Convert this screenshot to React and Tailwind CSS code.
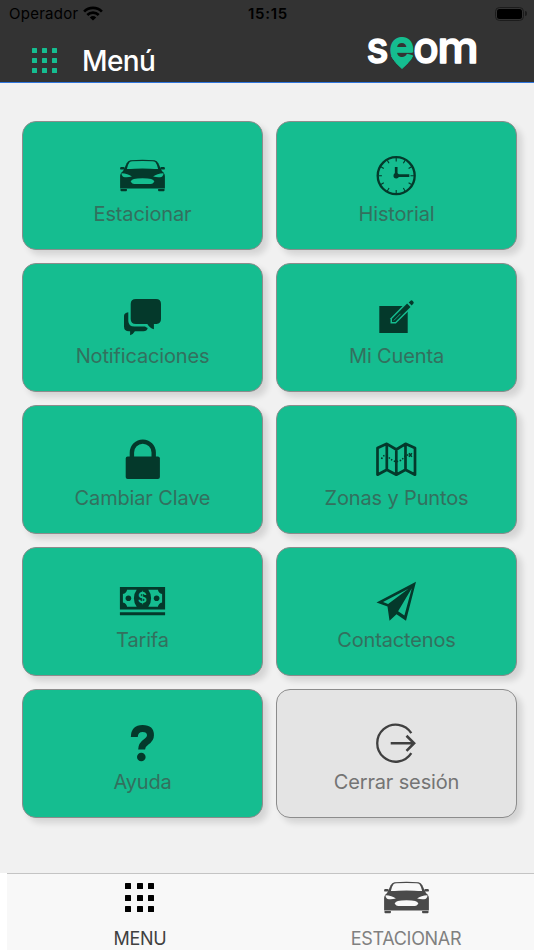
import clsx from "clsx"

function CarIcon({ hole }) {
  return (
    <svg viewBox="0 0 48 48" className="size-[48px] fill-current">
      <path d="M4.2 20 L8.2 11.2 Q9.5 8.6 12 8.3 Q24 7.2 36 8.3 Q38.5 8.6 39.8 11.2 L43.8 20 Z" />
      <path className={hole} d="M8.3 17.2 Q9.2 12.5 11 10.2 Q12 9.4 14 9.3 Q24 8.5 34 9.3 Q36 9.4 37 10.2 Q38.8 12.5 39.7 17.2 Q24 16 8.3 17.2 Z" />
      <path d="M7 17 H41 L45 20.5 Q46.4 22 46.4 24 V36.5 H1.6 V24 Q1.6 22 3 20.5 Z" />
      <rect x="1.6" y="15" width="4.6" height="2.6" rx="1.2" />
      <rect x="41.8" y="15" width="4.6" height="2.6" rx="1.2" />
      <path d="M2 37.1 H8.4 V38.4 Q8.4 39.2 7.6 39.2 H2.8 Q2 39.2 2 38.4 Z M39.6 37.1 H46 V38.4 Q46 39.2 45.2 39.2 H40.4 Q39.6 39.2 39.6 38.4 Z" />
      <path className={hole} d="M3 21.3 Q9.5 21.5 13.4 24.6 Q8 26 4.5 24.8 Q2.9 24 3 21.3 Z M45 21.3 Q38.5 21.5 34.6 24.6 Q40 26 43.5 24.8 Q45.1 24 45 21.3 Z" />
      <path className={hole} d="M24 26.2 Q35.5 26.2 35.5 29.2 Q35.5 32.1 30 32.1 H18 Q12.5 32.1 12.5 29.2 Q12.5 26.2 24 26.2 Z" />
    </svg>
  )
}

const TICKS = [0, 30, 60, 90, 120, 150, 180, 210, 240, 270, 300, 330]

function ClockIcon() {
  return (
    <svg viewBox="0 0 48 48" className="size-[48px] fill-none stroke-current">
      <circle cx="23.7" cy="23.7" r="18.5" strokeWidth="2.3" />
      {TICKS.map((deg) => (
        <path key={deg} d="M23.7 6 V9.4" strokeWidth="1.1" transform={`rotate(${deg} 23.7 23.7)`} />
      ))}
      <path d="M23.7 23.7 V15 M23.7 23.7 H36.8" strokeWidth="2.7" />
      <circle cx="23.7" cy="23.7" r="2.7" className="fill-current stroke-none" />
    </svg>
  )
}

function ChatIcon() {
  return (
    <svg viewBox="0 0 48 48" className="size-[48px] fill-current">
      <path d="M17.5 5 H37.5 Q42.5 5 42.5 10 V25 Q42.5 29.4 38 30 H35.4 V35.3 Q31 34 28.8 30 H17.5 Q12.2 30 12.2 25 V10 Q12.2 5 17.5 5 Z" />
      <path d="M9.8 18.3 V27 Q10 32.5 16 32.6 H26.5 Q27.4 33.4 29.2 34 Q28.4 37.3 25 37.3 H16.4 Q14.5 40.6 11.6 41.3 V37.3 H10.5 Q5.5 37.2 5.5 32.5 V22 Q5.6 19 9.8 18.3 Z" />
    </svg>
  )
}

function EditIcon() {
  return (
    <svg viewBox="0 0 48 48" className="size-[48px] fill-current">
      <path d="M6.8 12 H35.2 V39 H6.8 Z" />
      <path className="fill-[#15bd90]" d="M31 11 L18 24.2 V29.6 H23.4 L36.5 16.6 V11 Z" />
      <path d="M34.6 9.6 L19.5 24.8 V28.1 H22.9 L38 13 Z" />
      <path d="M36.2 8.5 L38.4 6.5 Q39.2 6 40 6.8 L41 7.9 Q41.6 8.7 40.9 9.6 L39.2 11.6 Z" />
      <path className="fill-none stroke-[#15bd90] stroke-[0.8]" d="M21.3 26.5 L28 19.8" />
    </svg>
  )
}

function LockIcon() {
  return (
    <svg viewBox="0 0 48 48" className="size-[48px] fill-current">
      <rect x="7.2" y="20.6" width="34.2" height="22.4" rx="2" />
      <path className="fill-none stroke-current stroke-[4.4]" d="M13.4 21.5 V16.5 A10.9 10.9 0 0 1 35.2 16.5 V21.5" />
    </svg>
  )
}

function MapIcon() {
  return (
    <svg viewBox="0 0 48 48" className="size-[48px] fill-none stroke-current">
      <path
        strokeWidth="2.7"
        strokeLinejoin="round"
        d="M5 12 L14.3 7.8 L23.8 13.5 L33 7.8 L42.5 12 V38.7 L33 33.8 L23.8 38.7 L14.3 33.8 L5 38.7 Z M14.3 7.8 V34 M23.8 13.5 V38.5 M33 7.8 V34"
      />
      <path strokeWidth="1.5" strokeDasharray="1.5 1.6" d="M9 23 Q11 18.5 14.3 19.6 Q20 25.5 23.8 25.5 Q29 25.5 33 19.5 L36 18.8" />
      <path strokeWidth="1.4" d="M36.4 17.2 L39.4 20.8 M39.4 17.2 L36.4 20.8" />
    </svg>
  )
}

function MoneyIcon() {
  return (
    <svg viewBox="0 0 48 48" className="size-[48px] fill-current">
      <path d="M1.4 9 H46.6 V31.4 H1.4 Z M1.4 34.2 H46.6 V37.3 H1.4 Z" />
      <path
        className="fill-[#15bd90]"
        d="M8.6 11.7 H18.2 Q15.4 15.5 15.4 20.2 Q15.4 25 18.2 28.8 H8.6 Q8 25.3 4.4 24.4 V16 Q8 15.2 8.6 11.7 Z M39.4 11.7 H29.8 Q32.6 15.5 32.6 20.2 Q32.6 25 29.8 28.8 H39.4 Q40 25.3 43.6 24.4 V16 Q40 15.2 39.4 11.7 Z"
      />
      <circle cx="9.9" cy="20.2" r="2.8" />
      <circle cx="38.1" cy="20.2" r="2.8" />
      <text x="24" y="25.3" textAnchor="middle" className="fill-[#15bd90] font-['Inter'] text-[14px] font-semibold">
        $
      </text>
    </svg>
  )
}

function PlaneIcon() {
  return (
    <svg viewBox="0 0 48 48" className="size-[48px] fill-current">
      <path d="M43.5 3.7 L4 24.4 L15 28.6 L17 42.7 L24 36.2 L33.5 42.7 Z" />
      <path className="fill-[#15bd90]" d="M36 10.8 L10.5 24 L15.6 26 Z M39.3 10.2 L25.6 33.2 L31.9 37.6 Z" />
    </svg>
  )
}

function HelpIcon() {
  return (
    <svg viewBox="0 0 48 48" className="size-[48px] fill-none stroke-current">
      <path strokeWidth="6.9" d="M15.8 17 Q16 8.5 24.1 8.5 Q32 8.5 32 15.3 Q32 19 28 21.6 Q23.1 25 23.1 29.4" />
      <circle cx="22.8" cy="37" r="4.3" className="fill-current stroke-none" />
    </svg>
  )
}

function LogoutIcon() {
  return (
    <svg viewBox="0 0 48 48" className="size-[48px] fill-none stroke-current">
      <path strokeWidth="2.3" d="M38.8 13.2 A18.5 18.5 0 1 0 38.8 33.2" />
      <path strokeWidth="2.6" d="M18.2 23.2 H41.5 M34 15.8 L41.6 23.2 L34 30.8" />
    </svg>
  )
}

function GridIcon({ className }) {
  return (
    <div className={clsx("grid grid-cols-3", className)}>
      {Array.from({ length: 9 }, (_, i) => (
        <span key={i} className="rounded-[0.5px] bg-current" />
      ))}
    </div>
  )
}

function StatusBar() {
  return (
    <div className="flex h-[27px] items-center text-black">
      <div className="flex flex-1 items-center gap-[5px] pl-[9px]">
        <span className="text-[15px] leading-none tracking-[0.25px]">Operador</span>
        <svg viewBox="0 0 20 15" className="h-[15px] w-[20px] fill-none stroke-current">
          <path strokeWidth="2.7" d="M1.1 5.6 A12.7 12.7 0 0 1 18.9 5.6 M4.3 9 A8.2 8.2 0 0 1 15.7 9" />
          <path className="fill-current stroke-none" d="M10 14.6 L6.8 11.4 Q10 8.8 13.2 11.4 Z" />
        </svg>
      </div>
      <span className="text-[15px] leading-none font-semibold tracking-[0.7px]">15:15</span>
      <div className="flex flex-1 items-center justify-end gap-[1px] pr-[7px]">
        <div className="h-[14px] w-[29px] rounded-[4.5px] border border-[#1c1c1c] p-[1px]">
          <div className="h-full rounded-[2.5px] bg-black" />
        </div>
        <div className="h-[5px] w-[2px] rounded-r-full bg-[#1c1c1c]" />
      </div>
    </div>
  )
}

function Logo() {
  return (
    <svg
      viewBox="0 0 120 66"
      className="h-[66px] w-[120px] font-['Inter'] text-[44px] font-medium"
      strokeLinejoin="round"
    >
      <g className="fill-white stroke-white stroke-[1.5]">
        <text x="2.6" y="44.6" textLength="22" lengthAdjust="spacingAndGlyphs">s</text>
        <text x="49.2" y="44.6" textLength="25.5" lengthAdjust="spacingAndGlyphs">o</text>
        <text x="73.2" y="44.6" textLength="41.5" lengthAdjust="spacingAndGlyphs">m</text>
      </g>
      <g className="fill-[#15bd90] stroke-[#15bd90]">
        <path d="M27.5 38 Q31 45 38 50.5 Q45 45 48.5 38 L40 42 Z" />
        <text x="25.6" y="44" strokeWidth="2.2" textLength="24.6" lengthAdjust="spacingAndGlyphs">e</text>
      </g>
    </svg>
  )
}

const ITEMS = [
  { label: "Estacionar", icon: <CarIcon hole="fill-[#15bd90]" /> },
  { label: "Historial", icon: <ClockIcon /> },
  { label: "Notificaciones", icon: <ChatIcon /> },
  { label: "Mi Cuenta", icon: <EditIcon /> },
  { label: "Cambiar Clave", icon: <LockIcon /> },
  { label: "Zonas y Puntos", icon: <MapIcon /> },
  { label: "Tarifa", icon: <MoneyIcon /> },
  { label: "Contactenos", icon: <PlaneIcon /> },
  { label: "Ayuda", icon: <HelpIcon /> },
  { label: "Cerrar sesión", icon: <LogoutIcon />, muted: true },
]

function MenuCard({ label, icon, muted }) {
  return (
    <button
      type="button"
      className={clsx(
        "flex h-[129px] flex-col items-center rounded-[14px] border border-[#8c8c8c] pt-[30px] shadow-[5px_5px_6px_rgba(0,0,0,0.12)]",
        muted ? "bg-[#e4e4e4] text-[#404040]" : "bg-[#15bd90] text-[#04392b]"
      )}
    >
      <span className="mr-[1px] translate-x-[0.5px]">{icon}</span>
      <span
        className={clsx(
          "text-[20px] leading-[28px] font-normal tracking-[-0.15px]",
          muted ? "text-[#747474]" : "text-[#33705e]"
        )}
      >
        {label}
      </span>
    </button>
  )
}

export default function App() {
  return (
    <div className="flex h-[950px] w-[534px] flex-col overflow-hidden bg-[#f1f1f1] font-['Inter',sans-serif]">
      <header className="h-[83px] shrink-0 border-b border-[#2f76dd] bg-[#333333]">
        <StatusBar />
        <div className="flex h-[55px] items-start pl-[32px]">
          <GridIcon className="mt-[21px] size-[25px] gap-[4.5px] text-[#15bd90]" />
          <h1 className="mt-[16px] ml-[25px] flex-1 text-[28px] leading-[36px] font-medium tracking-[-0.6px] text-white">Menú</h1>
          <div className="mt-[-9px] mr-[50px]">
            <Logo />
          </div>
        </div>
      </header>

      <main className="grid flex-1 content-start grid-cols-2 gap-[13px] pt-[38px] pr-[17px] pl-[22px]">
        {ITEMS.map((item) => (
          <MenuCard key={item.label} {...item} />
        ))}
      </main>

      <nav className="flex h-[77px] shrink-0 bg-white pl-[7px]">
        <div className="grid w-[532px] shrink-0 grid-cols-2 border-t border-[#c4c4c4] bg-[#f8f8f8]">
          <div className="flex flex-col items-center">
            <GridIcon className="mt-[9px] mr-[1px] mb-[14px] size-[29px] gap-[5.5px] text-black" />
            <span className="text-[18px] leading-[26px] tracking-[-0.3px] text-[#404040]">MENU</span>
          </div>
          <div className="flex flex-col items-center text-[#4a4a4a]">
            <span className="translate-x-[0.5px]">
              <CarIcon hole="fill-[#f8f8f8]" />
            </span>
            <span className="mt-[4px] text-[18px] leading-[26px] tracking-[-0.3px] text-[#808080]">ESTACIONAR</span>
          </div>
        </div>
      </nav>
    </div>
  )
}
